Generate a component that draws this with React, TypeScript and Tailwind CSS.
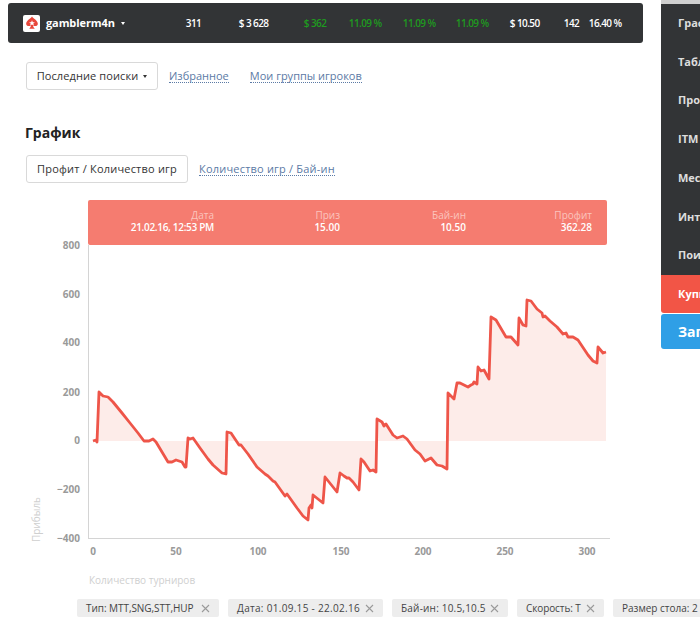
const font = "font-['Open_Sans','Liberation_Sans',sans-serif]";

const stats = [
  { w: 'w-[53px]', text: '311', green: false },
  { w: 'w-[65px]', text: '$ 3 628', green: false },
  { w: 'w-[45px]', text: '$ 362', green: true },
  { w: 'w-[54px]', text: '11.09 %', green: true },
  { w: 'w-[53px]', text: '11.09 %', green: true },
  { w: 'w-[54px]', text: '11.09 %', green: true },
  { w: 'w-[54px]', text: '$ 10.50', green: false },
  { w: 'w-[25px]', text: '142', green: false },
  { w: 'w-[38px]', text: '16.40 %', green: false },
];

const menu = ['График', 'Таблица', 'Профит', 'ITM', 'Месяц', 'Интервал', 'Поиск'];

const filters = [
  { text: 'Тип: MTT,SNG,STT,HUP', cls: 'w-[142px] tracking-[-0.05px]' },
  { text: 'Дата: 01.09.15 - 22.02.16', cls: 'w-[155px] tracking-[0.3px]' },
  { text: 'Бай-ин: 10.5,10.5', cls: 'w-[116px] tracking-[0.2px]' },
  { text: 'Скорость: T', cls: 'w-[87px] tracking-[-0.1px]' },
  { text: 'Размер стола: 2', cls: 'w-[110px] tracking-normal' },
];

const tooltip = [
  { label: 'Дата', value: '21.02.16, 12:53 PM', cls: 'tracking-[-0.3px]' },
  { label: 'Приз', value: '15.00', cls: '' },
  { label: 'Бай-ин', value: '10.50', cls: '' },
  { label: 'Профит', value: '362.28', cls: '' },
];

const line: [number, number][] = [
  [93, 441], [96, 440], [97, 442], [99, 392], [103, 396], [108, 397], [113, 402], [122, 413], [130, 423], [138, 433],
  [144, 441], [149, 441], [153, 439], [156, 442], [162, 452], [168, 462], [172, 462], [176, 460], [179, 461], [182, 462],
  [185, 467], [186, 467], [188, 438], [190, 439], [193, 438], [200, 448], [208, 459], [213, 465], [222, 473], [226, 474],
  [227, 432], [231, 433], [239, 445], [241, 445], [248, 454], [257, 467], [265, 474], [268, 476], [273, 481], [275, 482],
  [285, 496], [287, 494], [297, 508], [303, 516], [308, 520], [309, 508], [311, 505], [312, 508], [313, 495], [318, 499],
  [323, 503], [325, 477], [337, 492], [340, 473], [344, 476], [347, 478], [349, 478], [353, 482], [359, 490], [361, 459],
  [364, 462], [370, 471], [373, 470], [376, 472], [377, 419], [382, 422], [384, 426], [386, 424], [393, 435], [397, 438],
  [403, 436], [407, 439], [415, 450], [420, 454], [425, 461], [431, 458], [437, 465], [442, 466], [447, 469], [448, 393],
  [454, 399], [457, 383], [460, 383], [466, 386], [468, 387], [471, 385], [473, 384], [474, 382], [477, 384], [478, 367],
  [481, 371], [484, 370], [489, 379], [491, 317], [496, 320], [506, 337], [511, 337], [518, 345], [519, 318], [523, 325],
  [526, 326], [527, 300], [531, 301], [537, 309], [542, 313], [543, 317], [545, 316], [550, 321], [557, 327], [563, 334],
  [566, 333], [568, 337], [573, 337], [578, 340], [588, 355], [593, 361], [597, 363], [598, 347], [603, 353], [606, 352],
];

// picture coordinates -> svg coordinates (the svg box starts at x=25, y=245)
const pts = line.map(([x, y]) => `${x - 25},${y - 245}`).join(' ');
const area = `68,196 ${pts} 581,196`;

const yTicks = [
  { label: '800', y: 0 },
  { label: '600', y: 49 },
  { label: '400', y: 97 },
  { label: '200', y: 147 },
  { label: '0', y: 195 },
  { label: '−200', y: 244 },
  { label: '−400', y: 293 },
];

const xTicks = [
  { label: '0', x: 68 },
  { label: '50', x: 151 },
  { label: '100', x: 233 },
  { label: '150', x: 316 },
  { label: '200', x: 398 },
  { label: '250', x: 480 },
  { label: '300', x: 562 },
];

function Chart() {
  return (
    <svg width="590" height="345" viewBox="0 0 590 345" className="block overflow-visible" fontFamily="'Open Sans','Liberation Sans',sans-serif">
      <polygon points={area} fill="#fdece9" />
      <polyline points={pts} fill="none" stroke="#ee5549" strokeWidth="2.8" strokeLinejoin="round" />
      <line x1="63.5" y1="0" x2="63.5" y2="293" stroke="#d4d4d4" />
      <line x1="63" y1="293.5" x2="585" y2="293.5" stroke="#d4d4d4" />
      {yTicks.map((t) => (
        <text key={t.label} x="55" y={t.y + 4} textAnchor="end" fontSize="10" fontWeight="700" fill="#9a9a9a">{t.label}</text>
      ))}
      {xTicks.map((t) => (
        <text key={t.label} x={t.x} y="310" textAnchor="middle" fontSize="10" fontWeight="700" fill="#9a9a9a">{t.label}</text>
      ))}
      <text x="15" y="297" transform="rotate(-90 15 297)" fontSize="10" fill="#cfcfcf">Прибыль</text>
      <text x="64" y="339" fontSize="10" fill="#cfcfcf">Количество турниров</text>
    </svg>
  );
}

export default function App() {
  return (
    <div className={`${font} h-[622px] w-[700px] overflow-hidden bg-white flex`}>
      <div className="w-[661px] shrink-0 pt-[3px]">
        {/* top bar */}
        <div className="ml-[8px] w-[635px] h-[40px] bg-[#323436] rounded-[3px] flex items-center text-white text-[10px] font-semibold">
          <div className="w-[17px] h-[17px] ml-[15px] bg-white rounded-[2px] flex items-center justify-center">
            <svg width="14" height="14" viewBox="0 0 12 12">
              <path d="M6 0.5C7.5 2.6 11 4 11 6.8C11 8.4 8.8 9.1 6.9 8.1C7 9.2 7.6 10.1 8.4 11H3.6C4.4 10.1 5 9.2 5.1 8.1C3.2 9.1 1 8.4 1 6.8C1 4 4.5 2.6 6 0.5Z" fill="#e8473b" />
              <path d="M6 3.6L6.7 5.3L8.5 5.4L7.1 6.5L7.6 8.2L6 7.3L4.4 8.2L4.9 6.5L3.5 5.4L5.3 5.3Z" fill="#fff" />
            </svg>
          </div>
          <span className="ml-[6px] text-[11px] font-bold tracking-[-0.1px]">gamblerm4n</span>
          <span className="ml-[6px] w-0 h-0 border-x-[2.5px] border-x-transparent border-t-[3px] border-t-white" />
          <div className="ml-[61px] flex">
            {stats.map((s, i) => (
              <span key={i} className={`${s.w} shrink-0 whitespace-nowrap tracking-[-0.6px] ${s.green ? 'text-[#1f9a1f]' : 'text-white'}`}>{s.text}</span>
            ))}
          </div>
        </div>

        {/* search tabs */}
        <div className="ml-[26px] mt-[19px] flex items-center text-[11px]">
          <div className="h-[28px] w-[132px] border border-[#d9d9d9] rounded-[3px] flex items-center justify-center gap-[5px] text-[#333] font-medium tracking-[0.1px]">
            Последние поиски
            <span className="w-0 h-0 border-x-[2.5px] border-x-transparent border-t-[3px] border-t-[#333]" />
          </div>
          <span className="ml-[11px] text-[#5b7aa5] border-b border-dotted border-[#5b7aa5] leading-[13px]">Избранное</span>
          <span className="ml-[21px] text-[#5b7aa5] border-b border-dotted border-[#5b7aa5] leading-[13px]">Мои группы игроков</span>
        </div>

        <div className="ml-[25px] mt-[33px] text-[14px] leading-[20px] font-bold text-[#222]">График</div>

        <div className="ml-[26px] mt-[12px] flex items-center text-[11px]">
          <div className="h-[28px] w-[162px] border border-[#d9d9d9] rounded-[3px] flex items-center justify-center text-[#333] font-medium tracking-[0.2px]">Профит / Количество игр</div>
          <span className="ml-[11px] text-[#5b7aa5] border-b border-dotted border-[#5b7aa5] leading-[13px] tracking-[0.2px]">Количество игр / Бай-ин</span>
        </div>

        {/* tooltip header */}
        <div className="ml-[88px] mt-[17px] w-[519px] h-[45px] bg-[#f57c70] rounded-[2px] flex text-right text-[10px] leading-[12px] pt-[9px]">
          {tooltip.map((t) => (
            <div key={t.label} className="w-[126px] shrink-0">
              <div className="text-[#fbc4be]">{t.label}</div>
              <div className={`text-white font-semibold ${t.cls}`}>{t.value}</div>
            </div>
          ))}
        </div>

        <div className="ml-[25px]">
          <Chart />
        </div>

        {/* active filters */}
        <div className="ml-[77px] mt-[9px] flex gap-[9px] text-[10px] text-[#444] font-medium">
          {filters.map((f) => (
            <div key={f.text} className={`${f.cls} h-[18px] shrink-0 bg-[#ededed] rounded-[2px] flex items-center justify-between px-[9px] whitespace-nowrap`}>
              {f.text}
              <svg width="9" height="9" viewBox="0 0 9 9" stroke="#9a9a9a" strokeWidth="1.1"><path d="M1 1L8 8M8 1L1 8" /></svg>
            </div>
          ))}
        </div>
      </div>

      {/* right menu, cut off by the window */}
      <div className="w-[200px] shrink-0">
        <div className="h-[4px] bg-[#cfcfcf]" />
        <div className="bg-[#323436] text-[#ddd] text-[11px] font-bold">
          {menu.map((m) => (
            <div key={m} className="h-[38.7px] pl-[17px] flex items-center">{m}</div>
          ))}
        </div>
        <div className="h-[38px] bg-[#f25546] rounded-bl-[3px] pl-[17px] flex items-center text-white text-[11px] font-bold">Купить</div>
        <div className="mt-[1px] h-[35px] bg-[#2f9fe6] rounded-l-[3px] pl-[17px] flex items-center text-white text-[14px] font-bold">Загрузить</div>
      </div>
    </div>
  );
}
